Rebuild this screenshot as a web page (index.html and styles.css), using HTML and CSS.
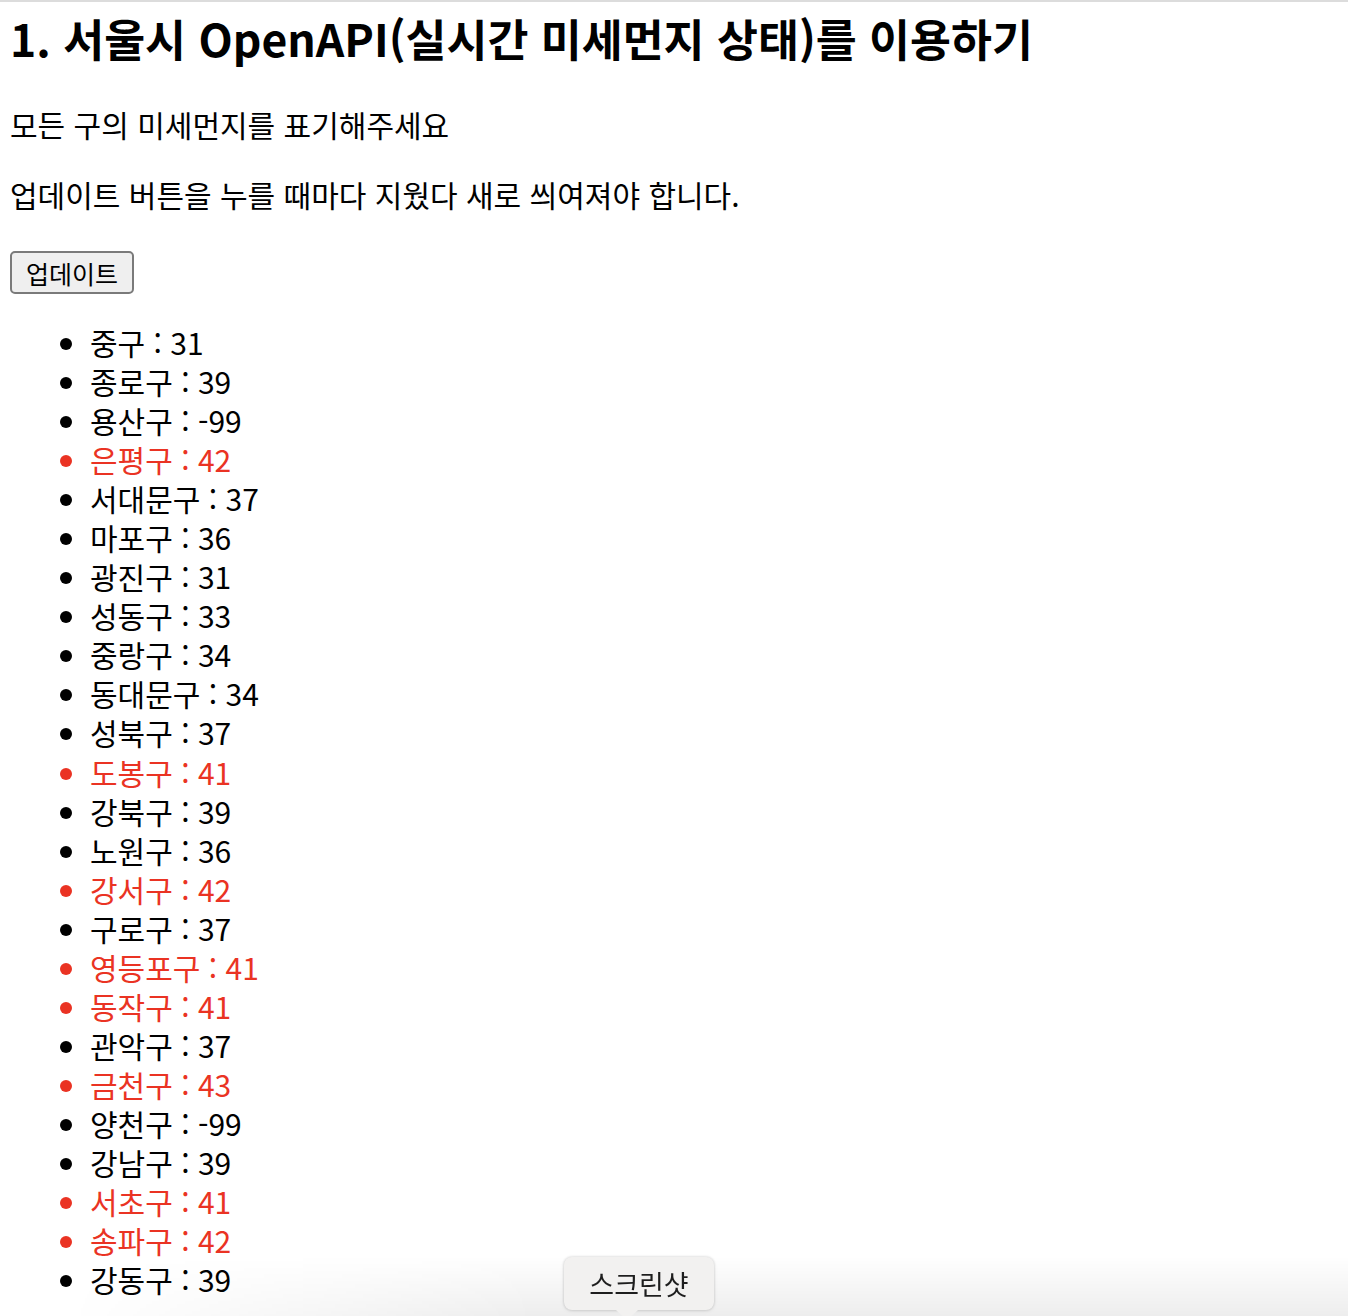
FILE: index.html
```html
<!DOCTYPE html>
<html lang="ko">
<head>
<meta charset="utf-8">
<title>미세먼지</title>
<link rel="stylesheet" href="styles.css">
</head>
<body>
<div class="topbar"></div>
<div class="page">
  <h1 class="title">1. 서울시 OpenAPI(실시간 미세먼지 상태)를 이용하기</h1>
  <p class="desc">모든 구의 미세먼지를 표기해주세요</p>
  <p class="desc desc-second">업데이트 버튼을 누를 때마다 지웠다 새로 씌여져야 합니다.</p>
  <button class="update-btn" type="button">업데이트</button>
  <ul class="dust-list">
    <li>중구 : 31</li>
    <li>종로구 : 39</li>
    <li>용산구 : -99</li>
    <li class="bad">은평구 : 42</li>
    <li>서대문구 : 37</li>
    <li>마포구 : 36</li>
    <li>광진구 : 31</li>
    <li>성동구 : 33</li>
    <li>중랑구 : 34</li>
    <li>동대문구 : 34</li>
    <li>성북구 : 37</li>
    <li class="bad">도봉구 : 41</li>
    <li>강북구 : 39</li>
    <li>노원구 : 36</li>
    <li class="bad">강서구 : 42</li>
    <li>구로구 : 37</li>
    <li class="bad">영등포구 : 41</li>
    <li class="bad">동작구 : 41</li>
    <li>관악구 : 37</li>
    <li class="bad">금천구 : 43</li>
    <li>양천구 : -99</li>
    <li>강남구 : 39</li>
    <li class="bad">서초구 : 41</li>
    <li class="bad">송파구 : 42</li>
    <li>강동구 : 39</li>
  </ul>
</div>
<div class="bottom-shade"></div>
<div class="tooltip">스크린샷<span class="tooltip-arrow"></span></div>
</body>
</html>
```

FILE: styles.css
```css
html, body {
  margin: 0;
  padding: 0;
  background: #ffffff;
}

body {
  font-family: "Noto Sans CJK KR", "Noto Sans", sans-serif;
  color: #000000;
}

.topbar {
  height: 2px;
  background: #dcdcdc;
}

.page {
  padding: 0 10px 40px 10px;
}

.title {
  margin: 10px 0 0 0;
  font-size: 44.5px;
  line-height: 52px;
  font-weight: 700;
}

.desc {
  margin: 41px 0 0 0;
  font-size: 30px;
  line-height: 39px;
}

.desc-second {
  margin-top: 31px;
}

.update-btn {
  display: block;
  margin-top: 37px;
  height: 43px;
  padding: 0 14px;
  font-family: "Noto Sans CJK KR", sans-serif;
  font-size: 25px;
  line-height: 38px;
  color: #000;
  background: #efefef;
  border: 2px solid #7a7a7a;
  border-radius: 5px;
}

.dust-list {
  margin: 29px 0 0 0;
  padding-left: 80px;
  font-size: 30px;
  line-height: 39.05px;
}

.dust-list li.bad {
  color: #ea3323;
}

.bottom-shade {
  position: fixed;
  left: 0;
  right: 0;
  bottom: 0;
  height: 60px;
  background: linear-gradient(to bottom, rgba(0,0,0,0), rgba(0,0,0,0.07));
  -webkit-mask-image: linear-gradient(to right, rgba(0,0,0,0) 5%, #000 40%);
  mask-image: linear-gradient(to right, rgba(0,0,0,0) 5%, #000 40%);
  pointer-events: none;
}

.tooltip {
  position: fixed;
  left: 564px;
  bottom: 6px;
  width: 150px;
  height: 53px;
  box-sizing: border-box;
  background: #f2f1f0;
  border-radius: 8px;
  box-shadow: 0 0 3px rgba(0,0,0,0.18), 0 1px 4px rgba(0,0,0,0.08);
  font-size: 27px;
  line-height: 53px;
  text-align: center;
  color: #1e1e1e;
}

.tooltip-arrow {
  position: absolute;
  left: 52px;
  bottom: -10px;
  width: 0;
  height: 0;
  border-left: 11px solid transparent;
  border-right: 11px solid transparent;
  border-top: 10px solid #f2f1f0;
}
```
